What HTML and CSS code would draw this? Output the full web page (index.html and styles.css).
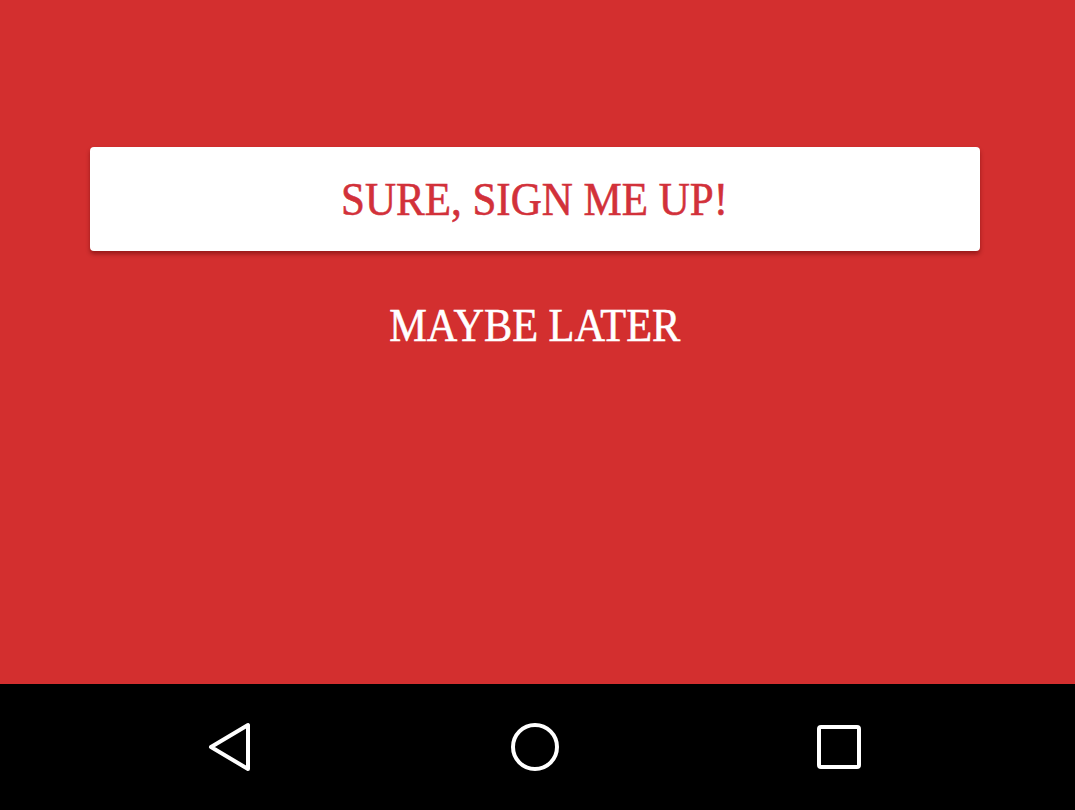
FILE: index.html
```html
<!DOCTYPE html>
<html>
<head>
<meta charset="utf-8">
<link rel="stylesheet" href="styles.css">
</head>
<body>
<div class="screen">
  <main class="content">
    <button class="primary"><span class="label">SURE, SIGN ME UP!</span></button>
    <button class="secondary"><span class="label label-wide">MAYBE LATER</span></button>
  </main>
  <nav class="navbar">
    <svg class="nav-icon" width="50" height="50" viewBox="0 0 50 50"><path d="M42 3 L42 47 L5 25 Z" fill="none" stroke="#fff" stroke-width="4" stroke-linejoin="round"/></svg>
    <svg class="nav-icon" width="50" height="50" viewBox="0 0 50 50"><circle cx="25" cy="25" r="22" fill="none" stroke="#fff" stroke-width="4"/></svg>
    <svg class="nav-icon" width="50" height="50" viewBox="0 0 50 50"><rect x="5" y="5" width="40" height="40" rx="2" fill="none" stroke="#fff" stroke-width="4"/></svg>
  </nav>
</div>
</body>
</html>
```
FILE: styles.css
```css
html, body { margin: 0; padding: 0; }
body { background: #d32f2f; font-family: "Roboto Slab", "Liberation Serif", serif; }
.screen { width: 1075px; height: 810px; display: flex; flex-direction: column; }
.content {
  height: 684px;
  background: #d32f2f;
  padding: 147px 95px 0 90px;
  box-sizing: border-box;
  display: flex;
  flex-direction: column;
  align-items: stretch;
}
.primary {
  height: 104px;
  background: #fff;
  border: none;
  border-radius: 4px;
  box-shadow: 0 3px 4px rgba(80,0,0,0.45);
  color: #d2313a;
  font-family: "Roboto Slab", "Liberation Serif", serif;
  font-size: 47px;
  padding: 0;
  display: flex;
  align-items: center;
  justify-content: center;
}
.label {
  display: inline-block;
  transform: scaleX(0.915);
  -webkit-text-stroke: 0.6px currentColor;
  white-space: nowrap;
}
.label-wide { transform: scaleX(0.9); }
.secondary {
  margin-top: 47px;
  align-self: center;
  background: none;
  border: none;
  color: #fff;
  font-family: "Roboto Slab", "Liberation Serif", serif;
  font-size: 47px;
  padding: 0;
  line-height: 1.15;
}
.navbar {
  height: 126px;
  background: #000;
  display: flex;
  align-items: center;
  justify-content: space-between;
  padding: 0 211px 0 206px;
}
.nav-icon { display: block; }
```
